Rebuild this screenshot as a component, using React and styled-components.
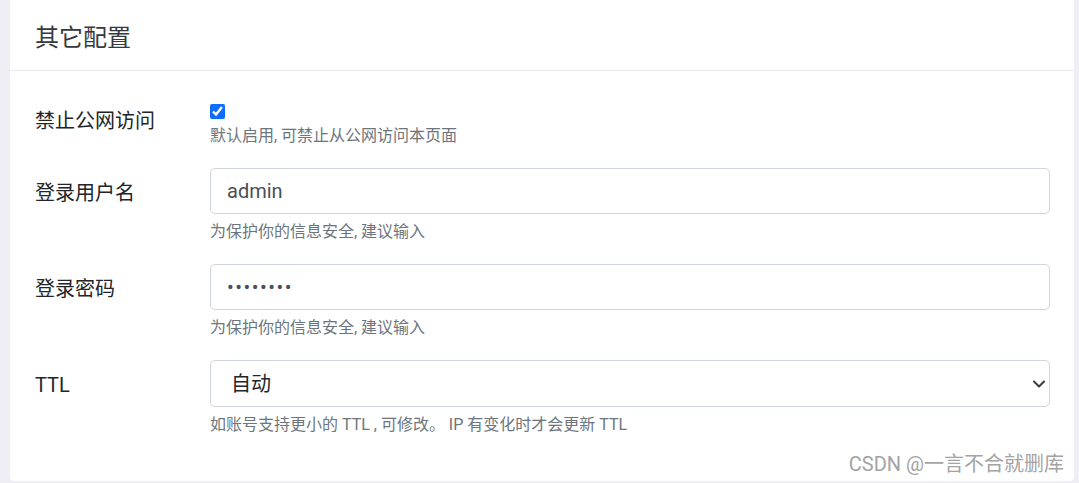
import React from 'react';
import styled, { createGlobalStyle } from 'styled-components';

const GlobalStyle = createGlobalStyle`
  html, body {
    margin: 0;
    padding: 0;
    background: #eeeef4;
  }
  body {
    font-family: "Segoe UI", Roboto, "Noto Sans CJK SC", sans-serif;
    color: #212529;
  }
`;

const fields = [
  { label: '登录用户名', type: 'text', value: 'admin', help: '为保护你的信息安全, 建议输入' },
  { label: '登录密码', type: 'password', value: '12345678', help: '为保护你的信息安全, 建议输入' },
];

const Chevron = () => (
  <svg width="12" height="8" viewBox="0 0 12 8" fill="none">
    <path d="M1 1.5l5 5 5-5" stroke="#343a40" strokeWidth="2" strokeLinecap="round" strokeLinejoin="round" />
  </svg>
);

const App = () => {
  return (
    <>
      <GlobalStyle />
      <Page>
        <Card>
          <CardHeader>其它配置</CardHeader>
          <CardBody>
            <Row>
              <Label $offset={5}>禁止公网访问</Label>
              <Control>
                <CheckWrap>
                  <Check type="checkbox" defaultChecked />
                </CheckWrap>
                <Help $flush>默认启用, 可禁止从公网访问本页面</Help>
              </Control>
            </Row>
            {fields.map((f) => (
              <Row key={f.label}>
                <Label>{f.label}</Label>
                <Control>
                  <Input
                    type={f.type}
                    defaultValue={f.value}
                    $secret={f.type === 'password'}
                  />
                  <Help>{f.help}</Help>
                </Control>
              </Row>
            ))}
            <Row>
              <Label>TTL</Label>
              <Control>
                <SelectWrap>
                  <Select defaultValue="auto">
                    <option value="auto">自动</option>
                  </Select>
                  <Arrow>
                    <Chevron />
                  </Arrow>
                </SelectWrap>
                <Help>如账号支持更小的 TTL , 可修改。 IP 有变化时才会更新 TTL</Help>
              </Control>
            </Row>
          </CardBody>
          <Watermark>CSDN @一言不合就删库</Watermark>
        </Card>
      </Page>
    </>
  );
};

export default App;

const Page = styled.div`
  padding: 0 5px 2px 10px;
  height: 483px;
  box-sizing: border-box;
  display: flex;
  flex-direction: column;
`;

const Card = styled.div`
  position: relative;
  flex: 1;
  background: #ffffff;
  border-radius: 0 0 4px 4px;
`;

const CardHeader = styled.div`
  height: 71px;
  box-sizing: border-box;
  padding: 0 25px;
  display: flex;
  align-items: center;
  border-bottom: 1px solid #e9e9f0;
  font-size: 24px;
  color: #343a40;
`;

const CardBody = styled.div`
  padding: 30px 24px 0 25px;
  display: flex;
  flex-direction: column;
  gap: 21px;
`;

const Row = styled.div`
  display: grid;
  grid-template-columns: 175px 1fr;
`;

const Label = styled.div`
  font-size: 20px;
  line-height: 30px;
  padding-top: ${(p) => (p.$offset != null ? p.$offset : 10)}px;
  color: #212529;
`;

const Control = styled.div`
  display: flex;
  flex-direction: column;
`;

const CheckWrap = styled.div`
  height: 24px;
`;

const Check = styled.input`
  width: 15px;
  height: 15px;
  margin: 3px 0 0;
  accent-color: #0d6efd;
`;

const Help = styled.div`
  margin-top: ${(p) => (p.$flush ? 0 : 7)}px;
  font-size: 16px;
  line-height: 22px;
  color: #6c757d;
`;

const Input = styled.input`
  box-sizing: border-box;
  width: 100%;
  height: 46px;
  padding: 0 16px;
  font-family: inherit;
  font-size: 20px;
  letter-spacing: ${(p) => (p.$secret ? '1.5px' : 'normal')};
  color: #495057;
  background: #ffffff;
  border: 1px solid #ced4da;
  border-radius: 5px;
  outline: none;
`;

const SelectWrap = styled.div`
  position: relative;
`;

const Select = styled.select`
  box-sizing: border-box;
  width: 100%;
  height: 47px;
  padding: 0 40px 0 20px;
  font-family: inherit;
  font-size: 20px;
  color: #212529;
  background: #ffffff;
  border: 1px solid #ced4da;
  border-radius: 5px;
  appearance: none;
  outline: none;
`;

const Arrow = styled.span`
  position: absolute;
  right: 5px;
  top: 50%;
  transform: translateY(-50%);
  display: flex;
  pointer-events: none;
`;

const Watermark = styled.div`
  position: absolute;
  right: 10px;
  bottom: 4px;
  font-size: 20px;
  color: #a3a3a3;
  text-shadow: 0 0 1px #ffffff;
`;
